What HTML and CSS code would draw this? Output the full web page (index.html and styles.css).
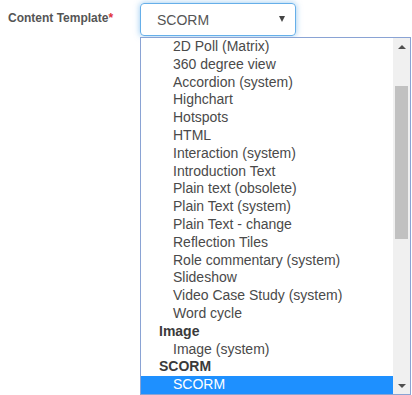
FILE: index.html
```html
<!DOCTYPE html>
<html>
<head>
	<title>Content Template</title>
	<meta charset="utf-8">
	<link rel="stylesheet" href="styles.css">
</head>
<body>
	<div class="form-row">
		<label class="label">Content Template<span class="req">*</span></label>
		<div class="field">
			<div class="select">
				<span>SCORM</span>
				<span class="caret"></span>
			</div>
			<div class="dropdown">
				<div class="options">
					<div class="opt">2D Poll (Matrix)</div>
					<div class="opt">360 degree view</div>
					<div class="opt">Accordion (system)</div>
					<div class="opt">Highchart</div>
					<div class="opt">Hotspots</div>
					<div class="opt">HTML</div>
					<div class="opt">Interaction (system)</div>
					<div class="opt">Introduction Text</div>
					<div class="opt">Plain text (obsolete)</div>
					<div class="opt">Plain Text (system)</div>
					<div class="opt">Plain Text - change</div>
					<div class="opt">Reflection Tiles</div>
					<div class="opt">Role commentary (system)</div>
					<div class="opt">Slideshow</div>
					<div class="opt">Video Case Study (system)</div>
					<div class="opt">Word cycle</div>
					<div class="group">Image</div>
					<div class="opt">Image (system)</div>
					<div class="group">SCORM</div>
					<div class="opt selected">SCORM</div>
				</div>
				<div class="scrollbar">
					<div class="arrow up"></div>
					<div class="track"><div class="thumb"></div></div>
					<div class="arrow down"></div>
				</div>
			</div>
		</div>
	</div>
</body>
</html>
```

FILE: styles.css
```css
*{
	padding: 0;
	margin: 0;
	box-sizing: border-box;
}
body{
	font-family: "Liberation Sans", Arial, sans-serif;
	background-color: #fff;
	color: #555;
}
.form-row{
	display: flex;
	align-items: flex-start;
	padding-top: 3px;
}
.label{
	width: 140px;
	padding-left: 8px;
	padding-top: 8px;
	font-size: 12px;
	font-weight: bold;
	color: #555;
}
.req{
	color: #e0313b;
}
.field{
	width: 272px;
	display: flex;
	flex-direction: column;
}
.select{
	width: 156px;
	height: 33px;
	border: 1px solid #66afe9;
	border-radius: 4px;
	box-shadow: 0 0 6px rgba(102,175,233,.7);
	display: flex;
	align-items: center;
	justify-content: space-between;
	padding: 1px 10px 0 16px;
	font-size: 14px;
	color: #555;
}
.caret{
	width: 0;
	height: 0;
	border-left: 3.5px solid transparent;
	border-right: 3.5px solid transparent;
	border-top: 6px solid #444;
	margin-top: -2px;
}
.dropdown{
	margin-top: 1px;
	width: 271px;
	height: 358px;
	border: 1px solid #8aa3d4;
	background-color: #fff;
	display: flex;
	overflow: hidden;
}
.options{
	flex: 1;
	font-size: 14px;
	color: #4a4a4a;
}
.opt, .group{
	height: 17.8px;
	line-height: 17.8px;
	white-space: nowrap;
}
.opt{
	padding-left: 32px;
}
.group{
	padding-left: 18px;
	font-weight: bold;
	color: #3a3a3a;
}
.selected{
	background-color: #1e90ff;
	color: #fff;
}
.scrollbar{
	width: 17px;
	background-color: #f0f0f0;
	display: flex;
	flex-direction: column;
}
.arrow{
	height: 17px;
	display: flex;
	align-items: center;
	justify-content: center;
}
.arrow::after{
	content: "";
	width: 0;
	height: 0;
	border-left: 4px solid transparent;
	border-right: 4px solid transparent;
}
.up::after{
	border-bottom: 4px solid #505050;
}
.down::after{
	border-top: 4px solid #505050;
}
.track{
	flex: 1;
	padding: 31px 2px 0 2px;
}
.thumb{
	height: 153px;
	background-color: #c1c1c1;
}
```
